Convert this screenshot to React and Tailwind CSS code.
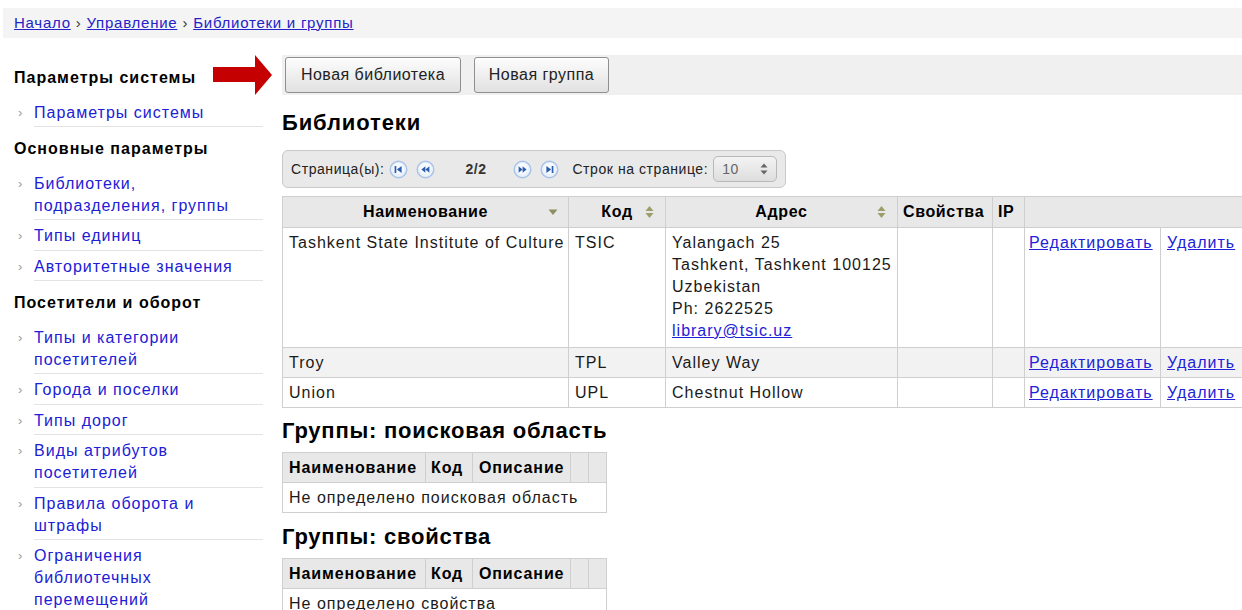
import React from 'react';

const sideSections = [
  { title: 'Параметры системы', items: [['Параметры системы']] },
  {
    title: 'Основные параметры',
    items: [['Библиотеки,', 'подразделения, группы'], ['Типы единиц'], ['Авторитетные значения']],
  },
  {
    title: 'Посетители и оборот',
    items: [
      ['Типы и категории', 'посетителей'],
      ['Города и поселки'],
      ['Типы дорог'],
      ['Виды атрибутов', 'посетителей'],
      ['Правила оборота и', 'штрафы'],
      ['Ограничения', 'библиотечных', 'перемещений'],
    ],
  },
];

const libraries = [
  {
    name: 'Tashkent State Institute of Culture',
    code: 'TSIC',
    address: ['Yalangach 25', 'Tashkent, Tashkent 100125', 'Uzbekistan', 'Ph: 2622525'],
    email: 'library@tsic.uz',
  },
  { name: 'Troy', code: 'TPL', address: ['Valley Way'] },
  { name: 'Union', code: 'UPL', address: ['Chestnut Hollow'] },
];

function SortBoth() {
  return (
    <svg width="9" height="13" viewBox="0 0 9 13" className="absolute right-[11px] top-1/2 -translate-y-1/2">
      <polygon points="4.5,0.5 8.5,5.5 0.5,5.5" fill="#9d9d6b" />
      <polygon points="0.5,7.5 8.5,7.5 4.5,12.5" fill="#9d9d6b" />
    </svg>
  );
}

function SortDown() {
  return (
    <svg width="10" height="7" viewBox="0 0 10 7" className="absolute right-[10px] top-1/2 -translate-y-1/2">
      <polygon points="0.5,1 9.5,1 5,6.5" fill="#8e8e60" />
    </svg>
  );
}

function PagerBtn({ kind }) {
  const c = '#2d5eae';
  return (
    <svg width="19" height="19" viewBox="0 0 19 19">
      <circle cx="9.5" cy="9.5" r="8.3" fill="#e9f1fb" stroke="#a9c2e6" strokeWidth="1.4" />
      <circle cx="9.5" cy="8.5" r="5.5" fill="#f7fbff" />
      {kind === 'first' && (
        <>
          <rect x="5.6" y="6" width="1.7" height="7" fill={c} />
          <polygon points="12.6,6 12.6,13 7.8,9.5" fill={c} />
        </>
      )}
      {kind === 'prev' && (
        <>
          <polygon points="9.4,6.2 9.4,12.8 5.4,9.5" fill={c} />
          <polygon points="13.4,6.2 13.4,12.8 9.4,9.5" fill={c} />
        </>
      )}
      {kind === 'next' && (
        <>
          <polygon points="5.6,6.2 5.6,12.8 9.6,9.5" fill={c} />
          <polygon points="9.6,6.2 9.6,12.8 13.6,9.5" fill={c} />
        </>
      )}
      {kind === 'last' && (
        <>
          <polygon points="6.4,6 6.4,13 11.2,9.5" fill={c} />
          <rect x="11.7" y="6" width="1.7" height="7" fill={c} />
        </>
      )}
    </svg>
  );
}

function Sidebar() {
  return (
    <aside className="ml-[14px] w-[249px] shrink-0 pt-[18px]">
      {sideSections.map((section) => (
        <div key={section.title}>
          <h3 className="mb-[8px] mt-[10.5px] text-[16px] font-bold leading-[22px] text-black">{section.title}</h3>
          <ul>
            {section.items.map((lines) => (
              <li key={lines.join(' ')} className="flex">
                <span className="w-[20px] shrink-0 pl-[4px] pt-[5px] text-[13px] leading-[22px] text-[#999]">›</span>
                <a href="#" className="flex-1 border-b border-[#e3e3e3] pb-[2.5px] pt-[5px] leading-[22px] text-[#2020d6]">
                  {lines.map((l) => (
                    <div key={l}>{l}</div>
                  ))}
                </a>
              </li>
            ))}
          </ul>
        </div>
      ))}
    </aside>
  );
}

function GroupTable({ empty }) {
  return (
    <table className="w-[324px] table-fixed border-collapse border border-[#cfcfcf]">
      <colgroup>
        <col className="w-[143px]" />
        <col className="w-[47px]" />
        <col className="w-[98px]" />
        <col className="w-[18px]" />
        <col className="w-[18px]" />
      </colgroup>
      <thead>
        <tr className="h-[30px] bg-[#e8e8e8] text-[16px] font-bold tracking-[0.055em] text-black">
          <th className="whitespace-nowrap border border-[#cfcfcf] px-[6px] text-left">Наименование</th>
          <th className="border border-[#cfcfcf] px-[5px] text-left">Код</th>
          <th className="border border-[#cfcfcf] px-[6px] text-left">Описание</th>
          <th className="border border-[#cfcfcf]" />
          <th className="border border-[#cfcfcf]" />
        </tr>
      </thead>
      <tbody>
        <tr className="h-[30px]">
          <td colSpan={5} className="whitespace-nowrap px-[6px] leading-[22px]">
            {empty}
          </td>
        </tr>
      </tbody>
    </table>
  );
}

export default function App() {
  return (
    <div className="relative min-h-screen bg-white font-['Liberation_Sans',Arial,sans-serif] text-[16px] tracking-[0.063em] text-[#1a1a1a]">
      <div className="pl-[3px] pt-[8px]">
        <div className="flex h-[30px] items-center bg-[#f4f4f4] pl-[11px] text-[15px] tracking-[0.05em]">
          <a href="#" className="text-[#2323c8] underline">Начало</a>
          <span className="mx-[5px] text-[#333]">›</span>
          <a href="#" className="text-[#2323c8] underline">Управление</a>
          <span className="mx-[5px] text-[#333]">›</span>
          <a href="#" className="text-[#2323c8] underline">Библиотеки и группы</a>
        </div>
      </div>

      <div className="flex">
        <Sidebar />

        <main className="ml-[19px] flex-1 pt-[17px]">
          <div className="flex h-[40px] items-center gap-[13px] bg-[#f0f0f0] pl-[3px]">
            <button className="h-[36px] w-[176px] rounded-[3px] border border-[#8f8f8f] bg-gradient-to-b from-[#fdfdfd] to-[#e1e1e1] text-[16px] tracking-[0.03em] text-[#222] shadow-[inset_0_1px_0_#fff]">
              Новая библиотека
            </button>
            <button className="h-[36px] w-[135px] rounded-[3px] border border-[#8f8f8f] bg-gradient-to-b from-[#fdfdfd] to-[#e1e1e1] text-[16px] tracking-[0.03em] text-[#222] shadow-[inset_0_1px_0_#fff]">
              Новая группа
            </button>
          </div>

          <h2 className="mb-[15px] mt-[16px] text-[22px] font-bold leading-[24px] tracking-[0.04em] text-black">Библиотеки</h2>

          <div className="flex h-[38px] w-[504px] items-center whitespace-nowrap rounded-[6px] border border-[#c9c9c9] bg-[#e9e9e9] pl-[8px] text-[14px] tracking-[0.04em] text-[#222]">
            <span>Страница(ы):</span>
            <span className="ml-[5px] flex shrink-0 gap-[8px]">
              <PagerBtn kind="first" />
              <PagerBtn kind="prev" />
            </span>
            <span className="ml-[30px] w-[48px] shrink-0 font-bold text-[#333]">2/2</span>
            <span className="flex shrink-0 gap-[8px]">
              <PagerBtn kind="next" />
              <PagerBtn kind="last" />
            </span>
            <span className="ml-[13px] shrink-0">Строк на странице:</span>
            <div className="ml-[5px] flex h-[26px] w-[64px] shrink-0 items-center justify-between rounded-[5px] border border-[#b8b8b8] bg-gradient-to-b from-[#f3f3f3] to-[#dedede] pl-[8px] pr-[8px] text-[#666]">
              <span>10</span>
              <svg width="8" height="14" viewBox="0 0 8 14">
                <polygon points="4,1.5 7.5,5.5 0.5,5.5" fill="#666" />
                <polygon points="0.5,8.5 7.5,8.5 4,12.5" fill="#666" />
              </svg>
            </div>
          </div>

          <table className="mt-[8px] w-[960px] table-fixed border-collapse border border-[#cfcfcf]">
            <colgroup>
              <col className="w-[286px]" />
              <col className="w-[97px]" />
              <col className="w-[232px]" />
              <col className="w-[95px]" />
              <col className="w-[32px]" />
              <col className="w-[136px]" />
              <col className="w-[82px]" />
            </colgroup>
            <thead>
              <tr className="h-[31px] bg-[#e8e8e8] font-bold tracking-[0.04em] text-black">
                <th className="relative border border-[#cfcfcf] text-center">
                  Наименование
                  <SortDown />
                </th>
                <th className="relative border border-[#cfcfcf] text-center">
                  Код
                  <SortBoth />
                </th>
                <th className="relative border border-[#cfcfcf] text-center">
                  Адрес
                  <SortBoth />
                </th>
                <th className="border border-[#cfcfcf] px-[5px] text-left">Свойства</th>
                <th className="border border-[#cfcfcf] px-[5px] text-left">IP</th>
                <th colSpan={2} className="border border-[#cfcfcf]" />
              </tr>
            </thead>
            <tbody>
              {libraries.map((lib, i) => (
                <tr key={lib.code} className={i === 0 ? 'h-[120px]' : i === 1 ? 'h-[30px] bg-[#f2f2f2]' : 'h-[30px]'}>
                  <td className="whitespace-nowrap border border-[#cfcfcf] px-[6px] pt-[4px] align-top leading-[22px]">{lib.name}</td>
                  <td className="border border-[#cfcfcf] px-[6px] pt-[4px] align-top leading-[22px]">{lib.code}</td>
                  <td className="whitespace-nowrap border border-[#cfcfcf] px-[6px] pt-[4px] align-top leading-[22px]">
                    {lib.address.map((l) => (
                      <div key={l}>{l}</div>
                    ))}
                    {lib.email && (
                      <a href="#" className="text-[#2222d8] underline">{lib.email}</a>
                    )}
                  </td>
                  <td className="border border-[#cfcfcf]" />
                  <td className="border border-[#cfcfcf]" />
                  <td className="whitespace-nowrap border border-[#cfcfcf] px-[4px] pt-[4px] align-top leading-[22px]">
                    <a href="#" className="text-[#2222d8] underline">Редактировать</a>
                  </td>
                  <td className="whitespace-nowrap border border-[#cfcfcf] px-[6px] pt-[4px] align-top leading-[22px]">
                    <a href="#" className="text-[#2222d8] underline">Удалить</a>
                  </td>
                </tr>
              ))}
            </tbody>
          </table>

          <h2 className="mb-[9px] mt-[11px] text-[22px] font-bold leading-[24px] tracking-[0.035em] text-black">Группы: поисковая область</h2>
          <GroupTable empty="Не определено поисковая область" />

          <h2 className="mb-[9px] mt-[12px] text-[22px] font-bold leading-[24px] tracking-[0.035em] text-black">Группы: свойства</h2>
          <GroupTable empty="Не определено свойства" />
        </main>
      </div>

      {/* red pointer towards the first button */}
      <svg width="64" height="42" viewBox="0 0 64 42" className="absolute left-[210px] top-[54px]">
        <polygon points="3,13 45,13 45,1 62,21 45,41 45,28 3,28" fill="#c40000" />
      </svg>
    </div>
  );
}
